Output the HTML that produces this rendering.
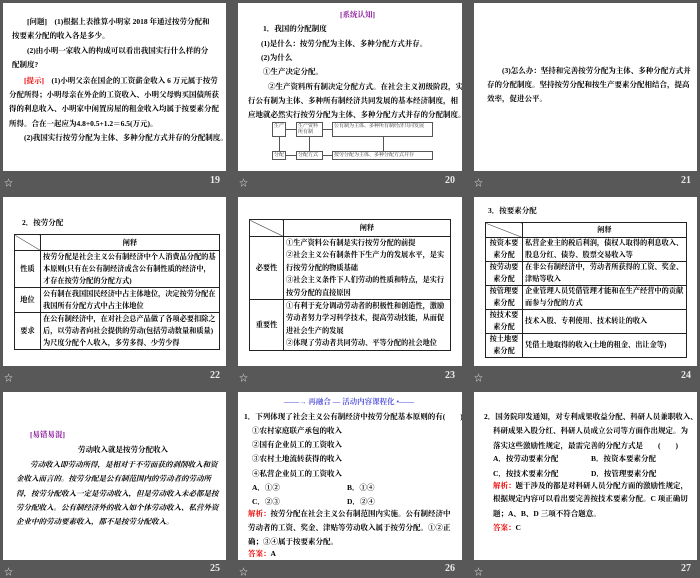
<!DOCTYPE html>
<html><head><meta charset="utf-8"><style>
*{margin:0;padding:0;box-sizing:border-box}
body{width:700px;height:578px;background:#585858;position:relative;overflow:hidden;font-family:"Liberation Serif","Noto Serif CJK SC","Noto Sans CJK SC",serif;color:#000}
.s{position:absolute;background:#fff;width:223px;height:168px;overflow:hidden}
.t{position:absolute;white-space:nowrap;font-size:7.5px;font-weight:bold;line-height:9px}
.n{position:absolute;color:#e8e8e8;font:bold 10px "Liberation Serif",serif}
.st{position:absolute;color:#ddd;font-size:9px}
.r{color:#e00}.p{color:#8a1a9a}.b{color:#5555dd}
table{position:absolute;border-collapse:collapse;font-size:7.2px;font-weight:bold}
td{border:1px solid #222;padding:0 2px;line-height:12px;vertical-align:middle}
td.c{text-align:center}
.bx{position:absolute;border:1px solid #555;font-size:5px;line-height:6px;padding:1px;color:#333;overflow:hidden}
</style></head><body>

<!-- Slide 19 -->
<div class="s" style="left:3px;top:3px">
<div class="t" style="left:24px;top:14px">[问题]　(1)根据上表推算小明家 2018 年通过按劳分配和</div>
<div class="t" style="left:9px;top:28px">按要素分配的收入各是多少。</div>
<div class="t" style="left:24px;top:43px">(2)由小明一家收入的构成可以看出我国实行什么样的分</div>
<div class="t" style="left:9px;top:57px">配制度?</div>
<div class="t" style="left:21px;top:73px"><span class="r">[提示]</span>　(1)小明父亲在国企的工资薪金收入 6 万元属于按劳</div>
<div class="t" style="left:6px;top:87px">分配所得；小明母亲在外企的工资收入、小明父母购买国债所获</div>
<div class="t" style="left:6px;top:101px">得的利息收入、小明家中闲置房屋的租金收入均属于按要素分配</div>
<div class="t" style="left:6px;top:116px">所得。合在一起应为4.8+0.5+1.2＝6.5(万元)。</div>
<div class="t" style="left:21px;top:130px">(2)我国实行按劳分配为主体、多种分配方式并存的分配制度。</div>
</div>
<div class="st" style="left:4px;top:176px">☆</div><div class="n" style="left:210px;top:175px">19</div>

<!-- Slide 20 -->
<div class="s" style="left:238px;top:3px;width:224px">
<div class="t p" style="left:102px;top:7px">[系统认知]</div>
<div class="t" style="left:25px;top:21px">1．我国的分配制度</div>
<div class="t" style="left:23px;top:36px">(1)是什么：按劳分配为主体、多种分配方式并存。</div>
<div class="t" style="left:23px;top:50px">(2)为什么</div>
<div class="t" style="left:25px;top:64px">①生产决定分配。</div>
<div class="t" style="left:30px;top:79px">②生产资料所有制决定分配方式。在社会主义初级阶段，实</div>
<div class="t" style="left:10px;top:93px">行公有制为主体、多种所有制经济共同发展的基本经济制度，相</div>
<div class="t" style="left:10px;top:107px">应地就必然实行按劳分配为主体、多种分配方式并存的分配制度。</div>
<div class="bx" style="left:34px;top:119px;width:14px;height:15px">生产</div>
<div class="bx" style="left:58px;top:119px;width:27px;height:15px">生产资料所有制</div>
<div class="bx" style="left:94px;top:119px;width:101px;height:15px">公有制为主体、多种所有制经济共同发展</div>
<div class="bx" style="left:34px;top:148px;width:14px;height:9px">分配</div>
<div class="bx" style="left:58px;top:148px;width:27px;height:9px">分配方式</div>
<div class="bx" style="left:94px;top:148px;width:101px;height:9px">按劳分配为主体、多种分配方式并存</div>
<div style="position:absolute;left:48px;top:126px;width:10px;border-top:1px solid #555"></div>
<div style="position:absolute;left:85px;top:126px;width:9px;border-top:1px solid #555"></div>
<div style="position:absolute;left:48px;top:152px;width:10px;border-top:1px solid #555"></div>
<div style="position:absolute;left:85px;top:152px;width:9px;border-top:1px solid #555"></div>
<div style="position:absolute;left:41px;top:134px;height:14px;border-left:1px solid #555"></div>
<div style="position:absolute;left:71px;top:134px;height:14px;border-left:1px solid #555"></div>
<div style="position:absolute;left:145px;top:134px;height:14px;border-left:1px solid #555"></div>
</div>
<div class="st" style="left:239px;top:176px">☆</div><div class="n" style="left:445px;top:175px">20</div>

<!-- Slide 21 -->
<div class="s" style="left:474px;top:3px">
<div class="t" style="left:28px;top:63px">(3)怎么办：坚持和完善按劳分配为主体、多种分配方式并</div>
<div class="t" style="left:13px;top:77px">存的分配制度。坚持按劳分配和按生产要素分配相结合，提高</div>
<div class="t" style="left:13px;top:91px">效率，促进公平。</div>
</div>
<div class="st" style="left:474px;top:176px">☆</div><div class="n" style="left:681px;top:175px">21</div>

<!-- Slide 22 -->
<div class="s" style="left:3px;top:197px;height:169px">
<div class="t" style="left:19px;top:21px">2．按劳分配</div>
<table style="left:11px;top:37px;width:206px">
<tr style="height:16px"><td style="width:26px;background:linear-gradient(to top right,transparent 48%,#333 50%,transparent 52%)"></td><td class="c">阐释</td></tr>
<tr><td class="c">性质</td><td>按劳分配是社会主义公有制经济中个人消费品分配的基本原则(只有在公有制经济或含公有制性质的经济中，才存在按劳分配的分配方式)</td></tr>
<tr><td class="c">地位</td><td>公有制在我国国民经济中占主体地位，决定按劳分配在我国所有分配方式中占主体地位</td></tr>
<tr><td class="c">要求</td><td>在公有制经济中，在对社会总产品做了各项必要扣除之后，以劳动者向社会提供的劳动(包括劳动数量和质量)为尺度分配个人收入，多劳多得、少劳少得</td></tr>
</table>
</div>
<div class="st" style="left:4px;top:371px">☆</div><div class="n" style="left:210px;top:370px">22</div>

<!-- Slide 23 -->
<div class="s" style="left:238px;top:197px;width:224px;height:169px">
<table style="left:11px;top:22px;width:202px">
<tr style="height:17px"><td style="width:34px;background:linear-gradient(to top right,transparent 48%,#333 50%,transparent 52%)"></td><td class="c">阐释</td></tr>
<tr><td class="c">必要性</td><td style="line-height:12.4px">①生产资料公有制是实行按劳分配的前提<br>②社会主义公有制条件下生产力的发展水平，是实行按劳分配的物质基础<br>③社会主义条件下人们劳动的性质和特点，是实行按劳分配的直接原因</td></tr>
<tr><td class="c">重要性</td><td style="line-height:12.4px">①有利于充分调动劳动者的积极性和创造性，激励劳动者努力学习科学技术，提高劳动技能，从而促进社会生产的发展<br>②体现了劳动者共同劳动、平等分配的社会地位</td></tr>
</table>
</div>
<div class="st" style="left:239px;top:371px">☆</div><div class="n" style="left:445px;top:370px">23</div>

<!-- Slide 24 -->
<div class="s" style="left:474px;top:197px;height:169px">
<div class="t" style="left:14px;top:9px">3．按要素分配</div>
<table style="left:11px;top:25px;width:202px">
<tr style="height:15px"><td style="width:37px;background:linear-gradient(to top right,transparent 48%,#333 50%,transparent 52%)"></td><td class="c">阐释</td></tr>
<tr><td class="c" style="line-height:11.5px">按资本要素分配</td><td style="line-height:11.5px">私营企业主的税后利润，债权人取得的利息收入、股息分红、债券、股票交易收入等</td></tr>
<tr><td class="c" style="line-height:11.5px">按劳动要素分配</td><td style="line-height:11.5px">在非公有制经济中，劳动者所获得的工资、奖金、津贴等收入</td></tr>
<tr><td class="c" style="line-height:11.5px">按管理要素分配</td><td style="line-height:11.5px">企业管理人员凭借管理才能和在生产经营中的贡献而参与分配的方式</td></tr>
<tr><td class="c" style="line-height:11.5px">按技术要素分配</td><td style="line-height:11.5px">技术入股、专利使用、技术转让的收入</td></tr>
<tr><td class="c" style="line-height:11.5px">按土地要素分配</td><td style="line-height:11.5px">凭借土地取得的收入(土地的租金、出让金等)</td></tr>
</table>
</div>
<div class="st" style="left:474px;top:371px">☆</div><div class="n" style="left:681px;top:370px">24</div>

<!-- Slide 25 -->
<div class="s" style="left:3px;top:392px">
<div class="t p" style="left:27px;top:38px">[易错易混]</div>
<div class="t" style="left:75px;top:53px">劳动收入就是按劳分配收入</div>
<div class="t" style="left:27px;top:68px;font-style:italic">劳动收入即劳动所得，是相对于不劳而获的剥削收入和资</div>
<div class="t" style="left:13px;top:82px;font-style:italic">金收入而言的。按劳分配是公有制范围内的劳动者的劳动所</div>
<div class="t" style="left:13px;top:97px;font-style:italic">得，按劳分配收入一定是劳动收入，但是劳动收入未必都是按</div>
<div class="t" style="left:13px;top:111px;font-style:italic">劳分配收入。公有制经济外的收入如个体劳动收入、私营外资</div>
<div class="t" style="left:13px;top:125px;font-style:italic">企业中的劳动要素收入，都不是按劳分配收入。</div>
</div>
<div class="st" style="left:4px;top:565px">☆</div><div class="n" style="left:210px;top:563px">25</div>

<!-- Slide 26 -->
<div class="s" style="left:238px;top:392px;width:224px">
<div class="t b" style="left:46px;top:5px">——→ 再融合 — 活动内容课程化 •——</div>
<div class="t" style="left:6px;top:20px">1．下列体现了社会主义公有制经济中按劳分配基本原则的有(　　)</div>
<div class="t" style="left:14px;top:34px">①农村家庭联产承包的收入</div>
<div class="t" style="left:14px;top:48px">②国有企业员工的工资收入</div>
<div class="t" style="left:14px;top:62px">③农村土地流转获得的收入</div>
<div class="t" style="left:14px;top:77px">④私营企业员工的工资收入</div>
<div class="t" style="left:14px;top:91px">A．①②</div><div class="t" style="left:109px;top:91px">B．①④</div>
<div class="t" style="left:14px;top:105px">C．②③</div><div class="t" style="left:109px;top:105px">D．②④</div>
<div class="t" style="left:10px;top:117px"><span class="r">解析：</span>按劳分配在社会主义公有制范围内实施。公有制经济中</div>
<div class="t" style="left:10px;top:131px">劳动者的工资、奖金、津贴等劳动收入属于按劳分配。①②正</div>
<div class="t" style="left:10px;top:145px">确；③④属于按要素分配。</div>
<div class="t" style="left:10px;top:157px"><span class="r">答案：</span>A</div>
</div>
<div class="st" style="left:239px;top:565px">☆</div><div class="n" style="left:445px;top:563px">26</div>

<!-- Slide 27 -->
<div class="s" style="left:474px;top:392px">
<div class="t" style="left:10px;top:20px">2．国务院印发通知，对专利成果收益分配、科研人员兼职收入、</div>
<div class="t" style="left:19px;top:34px">科研成果入股分红、科研人员成立公司等方面作出规定。为</div>
<div class="t" style="left:19px;top:49px">落实这些激励性规定，最需完善的分配方式是　　(　　)</div>
<div class="t" style="left:19px;top:62px">A．按劳动要素分配</div><div class="t" style="left:117px;top:62px">B．按资本要素分配</div>
<div class="t" style="left:19px;top:77px">C．按技术要素分配</div><div class="t" style="left:117px;top:77px">D．按管理要素分配</div>
<div class="t" style="left:19px;top:89px"><span class="r">解析：</span>题干涉及的都是对科研人员分配方面的激励性规定，</div>
<div class="t" style="left:19px;top:102px">根据规定内容可以看出要完善按技术要素分配。C 项正确切</div>
<div class="t" style="left:19px;top:117px">题；A、B、D 三项不符合题意。</div>
<div class="t" style="left:19px;top:131px"><span class="r">答案：</span>C</div>
</div>
<div class="st" style="left:474px;top:565px">☆</div><div class="n" style="left:681px;top:563px">27</div>

</body></html>
